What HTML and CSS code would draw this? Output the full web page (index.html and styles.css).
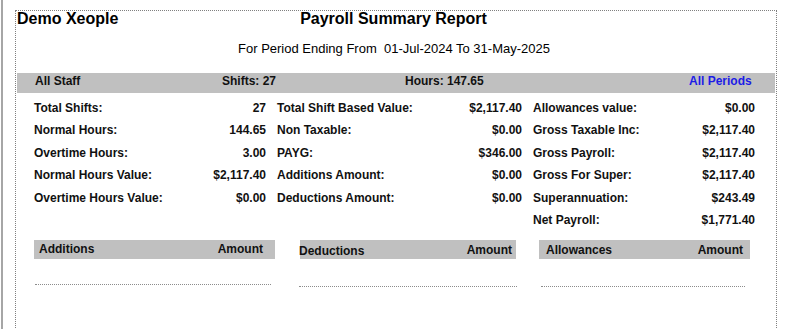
FILE: index.html
```html
<!DOCTYPE html>
<html>
<head>
<meta charset="utf-8">
<title>Payroll Summary Report</title>
<link rel="stylesheet" href="styles.css">
</head>
<body>
<div class="viewer">
  <div class="page">
    <div class="title-row">
      <div class="company">Demo Xeople</div>
      <div class="report-title">Payroll Summary Report</div>
      <div></div>
    </div>
    <div class="period">For Period Ending From&nbsp; 01-Jul-2024 To 31-May-2025</div>

    <div class="band">
      <div>All Staff</div>
      <div>Shifts: 27</div>
      <div>Hours: 147.65</div>
      <div class="link">All Periods</div>
    </div>

    <div class="summary">
      <div class="col">
        <div class="row"><span>Total Shifts:</span><span>27</span></div>
        <div class="row"><span>Normal Hours:</span><span>144.65</span></div>
        <div class="row"><span>Overtime Hours:</span><span>3.00</span></div>
        <div class="row"><span>Normal Hours Value:</span><span>$2,117.40</span></div>
        <div class="row"><span>Overtime Hours Value:</span><span>$0.00</span></div>
      </div>
      <div class="col">
        <div class="row"><span>Total Shift Based Value:</span><span>$2,117.40</span></div>
        <div class="row"><span>Non Taxable:</span><span>$0.00</span></div>
        <div class="row"><span>PAYG:</span><span>$346.00</span></div>
        <div class="row"><span>Additions Amount:</span><span>$0.00</span></div>
        <div class="row"><span>Deductions Amount:</span><span>$0.00</span></div>
      </div>
      <div class="col">
        <div class="row"><span>Allowances value:</span><span>$0.00</span></div>
        <div class="row"><span>Gross Taxable Inc:</span><span>$2,117.40</span></div>
        <div class="row"><span>Gross Payroll:</span><span>$2,117.40</span></div>
        <div class="row"><span>Gross For Super:</span><span>$2,117.40</span></div>
        <div class="row"><span>Superannuation:</span><span>$243.49</span></div>
        <div class="row"><span>Net Payroll:</span><span>$1,771.40</span></div>
      </div>
    </div>

    <div class="tables">
      <div class="tbl tbl-add">
        <div class="tbl-head"><span>Additions</span><span>Amount</span></div>
        <div class="tbl-rule"></div>
      </div>
      <div class="tbl tbl-ded">
        <div class="tbl-head"><span class="low">Deductions</span><span class="amt">Amount</span></div>
        <div class="tbl-rule"></div>
      </div>
      <div class="tbl tbl-all">
        <div class="tbl-head"><span>Allowances</span><span>Amount</span></div>
        <div class="tbl-rule"></div>
      </div>
    </div>
  </div>
</div>
</body>
</html>
```

FILE: styles.css
```css
* { box-sizing: border-box; }

html, body {
  margin: 0;
  padding: 0;
  background: #ffffff;
  overflow: hidden;
}

body {
  font-family: "Liberation Sans", Arial, sans-serif;
  color: #000;
  width: 793px;
  height: 329px;
}

.viewer {
  margin-left: 1px;
  border-left: 2px solid #a6a6a6;
  height: 329px;
  padding-left: 12px;
  padding-top: 10px;
}

.page {
  width: 762px;
  height: 330px;
  border-top: 1px dotted #808080;
  border-left: 1px dotted #808080;
  border-right: 1px dotted #808080;
}

.title-row {
  display: grid;
  grid-template-columns: 1fr auto 1fr;
  padding-left: 1px;
  padding-right: 6px;
  font-size: 16px;
  line-height: 16px;
  font-weight: bold;
}

.period {
  margin-top: 14px;
  font-size: 13px;
  line-height: 16px;
  text-align: center;
  padding-right: 4px;
}

.band {
  margin: 16px 1px 0 1px;
  height: 20px;
  background: #c0c0c0;
  display: grid;
  grid-template-columns: 187px 183px 284px auto;
  padding-left: 18px;
  padding-top: 1px;
  font-size: 12px;
  line-height: 14px;
  font-weight: bold;
  color: #111;
}

.band .link {
  color: #1c1ce6;
}

.summary {
  margin-top: 4px;
  margin-left: 18px;
  display: grid;
  grid-template-columns: 232px 245px 222px;
  column-gap: 11px;
  font-size: 12px;
  line-height: 22.4px;
  font-weight: bold;
  color: #111;
}

.row {
  display: flex;
  justify-content: space-between;
  white-space: nowrap;
}

.tables {
  margin-top: 9px;
  margin-left: 18px;
  display: flex;
  font-size: 12px;
  line-height: 14px;
  font-weight: bold;
  color: #111;
}

.tbl-head {
  height: 19px;
  background: #c0c0c0;
  display: flex;
  justify-content: space-between;
  align-items: flex-start;
  padding-top: 2px;
}

.tbl-rule {
  border-top: 1px dotted #8c8c8c;
}

.tbl-add {
  width: 241px;
}
.tbl-add .tbl-head {
  padding-left: 5px;
  padding-right: 12px;
}
.tbl-add .tbl-rule {
  margin-top: 25px;
  margin-left: 1px;
  width: 236px;
}

.tbl-ded {
  width: 216px;
  margin-left: 25px;
}
.tbl-ded .tbl-head {
  padding-right: 4px;
}
.tbl-ded .low {
  margin-left: -1px;
  padding-top: 2px;
}
.tbl-ded .amt {
  padding-top: 1px;
}
.tbl-ded .tbl-rule {
  margin-top: 27px;
  margin-left: -1px;
  width: 218px;
}

.tbl-all {
  width: 211px;
  margin-left: 23px;
}
.tbl-all .tbl-head {
  padding-left: 7px;
  padding-right: 7px;
  padding-top: 3px;
}
.tbl-all .tbl-rule {
  margin-top: 27px;
  margin-left: 2px;
  width: 204px;
}
```
